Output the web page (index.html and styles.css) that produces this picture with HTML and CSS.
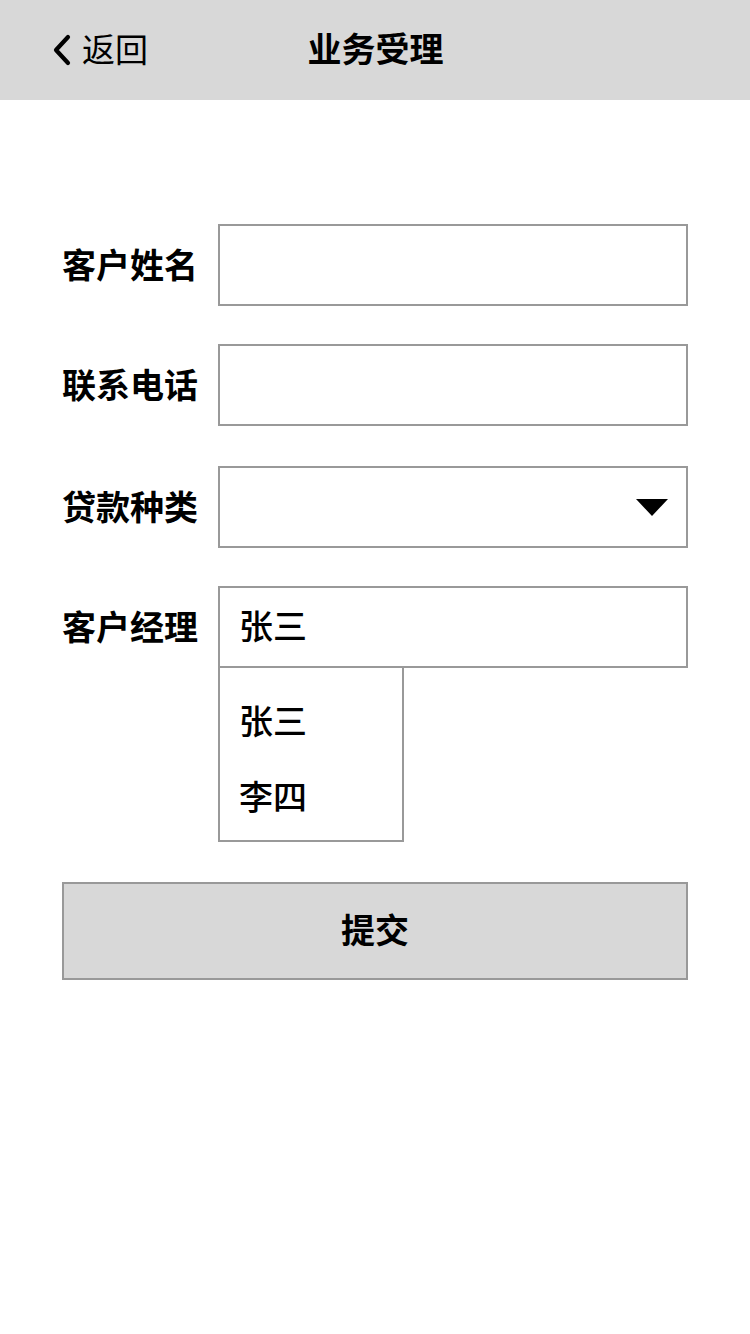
FILE: index.html
```html
<!DOCTYPE html>
<html lang="zh-CN">
<head>
<meta charset="utf-8">
<title>业务受理</title>
<link rel="stylesheet" href="styles.css">
</head>
<body>
<header class="topbar">
  <a class="back">
    <svg class="back-icon" width="22" height="32" viewBox="0 0 22 32"><path d="M17 3 L5 16 L17 29" fill="none" stroke="#000" stroke-width="4.2" stroke-linecap="round" stroke-linejoin="round"/></svg>
    <span class="back-text">返回</span>
  </a>
  <h1 class="title">业务受理</h1>
</header>

<main class="form">
  <div class="row">
    <label class="label">客户姓名</label>
    <div class="field"><div class="box"></div></div>
  </div>
  <div class="row">
    <label class="label">联系电话</label>
    <div class="field"><div class="box"></div></div>
  </div>
  <div class="row row-spaced">
    <label class="label">贷款种类</label>
    <div class="field"><div class="box select"><span class="caret"></span></div></div>
  </div>
  <div class="row">
    <label class="label">客户经理</label>
    <div class="field">
      <div class="box"><span class="value">张三</span></div>
      <ul class="options">
        <li class="option">张三</li>
        <li class="option">李四</li>
      </ul>
    </div>
  </div>
  <button class="submit">提交</button>
</main>
</body>
</html>
```

FILE: styles.css
```css
* { box-sizing: border-box; }
html, body {
  margin: 0;
  padding: 0;
  background: #fff;
  font-family: "Noto Sans CJK SC", "Noto Sans", sans-serif;
  color: #000;
}
.topbar {
  height: 100px;
  background: #d8d8d8;
  display: flex;
  align-items: center;
  justify-content: center;
  position: relative;
  padding-bottom: 4px;
}
.back {
  position: absolute;
  left: 51px;
  top: 0;
  height: 100px;
  display: flex;
  align-items: center;
  gap: 9px;
  padding-bottom: 4px;
}
.back-icon { display: block; margin-top: 4px; }
.back-text {
  font-size: 33px;
  font-weight: 400;
  line-height: 1;
}
.title {
  margin: 0 0 0 1px;
  font-size: 34px;
  font-weight: 700;
  line-height: 1;
}
.form {
  padding: 124px 62px 0 62px;
  display: flex;
  flex-direction: column;
  gap: 38px;
}
.row {
  display: flex;
  align-items: flex-start;
}
.row-spaced { margin-top: 2px; }
.label {
  width: 156px;
  height: 82px;
  display: flex;
  align-items: center;
  font-size: 34px;
  font-weight: 700;
  line-height: 1;
  padding-bottom: 3px;
}
.field { flex: 1; }
.box {
  height: 82px;
  border: 2px solid #999;
  background: #fff;
  display: flex;
  align-items: center;
  padding: 0 18px 4px 19px;
}
.select { justify-content: flex-end; padding-bottom: 0; }
.caret {
  width: 0;
  height: 0;
  border-left: 16px solid transparent;
  border-right: 16px solid transparent;
  border-top: 17px solid #000;
  margin-top: 1px;
}
.value, .option {
  font-size: 34px;
  font-weight: 500;
  line-height: 1;
}
.options {
  list-style: none;
  margin: 0;
  width: 186px;
  border: 2px solid #999;
  border-top: none;
  padding: 14px 0 6px 19px;
}
.option {
  height: 76px;
  display: flex;
  align-items: center;
}
.submit {
  margin-top: 2px;
  height: 98px;
  width: 100%;
  background: #d8d8d8;
  border: 2px solid #999;
  font-family: inherit;
  font-size: 34px;
  font-weight: 700;
  color: #000;
  padding: 0 0 6px 0;
}
```
